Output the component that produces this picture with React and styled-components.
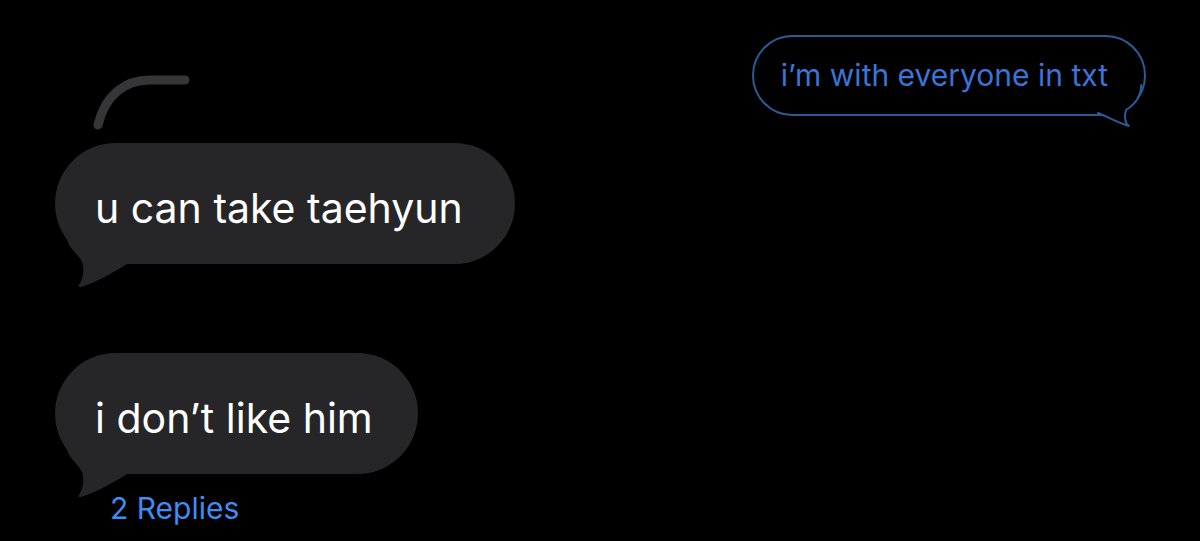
import React from 'react';
import styled, { createGlobalStyle } from 'styled-components';

const GlobalStyle = createGlobalStyle`
    html, body {
        margin: 0;
        padding: 0;
        background: #000;
    }
    body {
        font-family: Inter, "Liberation Sans", sans-serif;
        -webkit-font-smoothing: antialiased;
    }
`;

const Screen = styled.div`
    width: 1200px;
    height: 541px;
    box-sizing: border-box;
    padding: 35px 54px 0 55px;
    background: #000;
    display: flex;
    flex-direction: column;
    align-items: flex-start;
    overflow: hidden;
`;

const TopRow = styled.div`
    align-self: stretch;
    height: 108px;
    display: flex;
    justify-content: space-between;
    align-items: flex-start;
`;

const ThreadLine = styled.svg`
    margin: 35px 0 0 35px;
    flex: none;
`;

const OutBubble = styled.div`
    position: relative;
    border: 2px solid #2b5a94;
    border-radius: 41px;
    padding: 20px 36px 20px 27px;
    font-size: 30px;
    line-height: 37px;
    color: #3b74d8;
    white-space: nowrap;
`;

const OutTail = styled.svg`
    position: absolute;
    right: -4px;
    bottom: -17px;
    overflow: visible;
`;

const Bubble = styled.div`
    position: relative;
    margin-top: ${p => p.$gap || 0}px;
    background: #262628;
    border-radius: 61px;
    padding: 40px ${p => p.$padRight || 48}px 31px 40px;
    font-size: 41px;
    line-height: 50px;
    color: #fff;
    white-space: nowrap;
`;

const InTail = styled.svg`
    position: absolute;
    left: 0;
    bottom: -24px;
    overflow: visible;
`;

const Replies = styled.div`
    margin: 17px 0 0 55px;
    font-size: 30px;
    line-height: 34px;
    color: #3f8cf2;
`;

function IncomingTail() {
    return (
        <InTail width="75" height="58" viewBox="0 0 75 58">
            <path
                d="M12 10 C16 22 27 26 28 36 C29 45 27 50 24 55 C23 57.5 25 57.5 27 56.5 C42 52 56 44 72 34 L72 0 L12 0 Z"
                fill="#262628"
            />
        </InTail>
    );
}

function OutgoingTail() {
    const curve = 'M57.2 18 C57 30 50 38 42 43 C40 50 41 56 45 59 C34 56 24 50 14 46';
    return (
        <OutTail width="64" height="64" viewBox="0 0 64 64">
            <path d={curve + ' L30 40 L50 22 Z'} fill="#000" />
            <path d={curve} fill="none" stroke="#2b5a94" strokeWidth="2" strokeLinecap="round" strokeLinejoin="round" />
        </OutTail>
    );
}

export default function App() {
    return (
        <>
            <GlobalStyle />
            <Screen>
                <TopRow>
                    <ThreadLine width="105" height="65" viewBox="0 0 105 65">
                        <path
                            d="M8 55 C15 25 35 10 60 10 L95 10"
                            fill="none"
                            stroke="#363638"
                            strokeWidth="9"
                            strokeLinecap="round"
                        />
                    </ThreadLine>
                    <OutBubble>
                        i’m with everyone in txt
                        <OutgoingTail />
                    </OutBubble>
                </TopRow>
                <Bubble $padRight={52}>
                    u can take taehyun
                    <IncomingTail />
                </Bubble>
                <Bubble $gap={89} $padRight={45}>
                    i don’t like him
                    <IncomingTail />
                </Bubble>
                <Replies>2 Replies</Replies>
            </Screen>
        </>
    );
}
